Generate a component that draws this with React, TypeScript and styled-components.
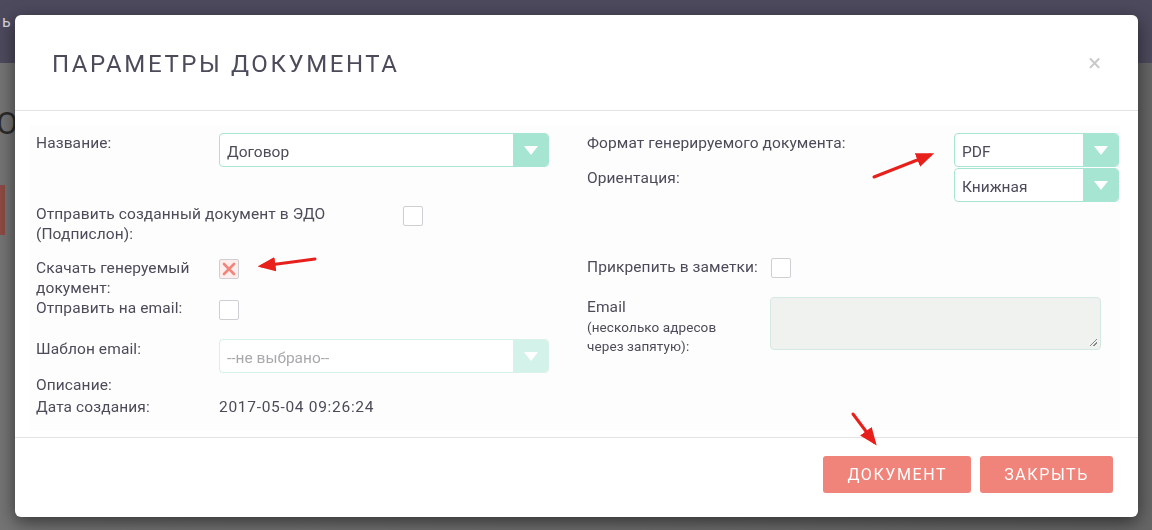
import React from "react";
import styled, { createGlobalStyle } from "styled-components";

const GlobalStyle = createGlobalStyle`
  html, body {
    margin: 0;
    padding: 0;
    width: 1152px;
    height: 530px;
    overflow: hidden;
    background: #6c6c6c;
    font-family: Roboto, "Liberation Sans", Arial, sans-serif;
  }
  * { box-sizing: border-box; }
`;

type FieldProps = { label: React.ReactNode; labelWidth: number; top: number; children?: React.ReactNode };

const Field: React.FC<FieldProps> = ({ label, labelWidth, top, children }) => (
  <Row $top={top}>
    <Label $w={labelWidth}>{label}</Label>
    {children}
  </Row>
);

const Select: React.FC<{ value: string; width: number; disabled?: boolean }> = ({ value, width, disabled }) => (
  <SelectBox $w={width} $disabled={disabled}>
    <SelectValue $disabled={disabled}>{value}</SelectValue>
    <SelectArrow $disabled={disabled}>
      <svg width="14" height="9" viewBox="0 0 14 9">
        <path d="M0 0 H14 L7 9 Z" fill="#fff" />
      </svg>
    </SelectArrow>
  </SelectBox>
);

const Checkbox: React.FC<{ checked?: boolean; offset?: number }> = ({ checked, offset = 0 }) => (
  <Check $checked={checked} $offset={offset}>
    {checked && (
      <svg width="14" height="14" viewBox="0 0 14 14">
        <path d="M2 2 L12 12 M12 2 L2 12" stroke="#f0857b" strokeWidth="2.6" strokeLinecap="round" />
      </svg>
    )}
  </Check>
);

const App: React.FC = () => {
  return (
    <React.Fragment>
      <GlobalStyle />
      <Page>
        <TopBar>
          <TopText>ь</TopText>
        </TopBar>
        <PageBody>
          <PageHeading>О</PageHeading>
          <PageButton />
        </PageBody>
      </Page>

      <Overlay>
        <Modal>
          <Header>
            <Title>Параметры документа</Title>
            <Close>×</Close>
          </Header>
          <Body>
            <Panel>
              <Column>
                <Field label="Название:" labelWidth={183} top={0}>
                  <Select value="Договор" width={330} />
                </Field>
                <Field
                  label={
                    <>
                      Отправить созданный документ в ЭДО
                      <br />
                      (Подпислон):
                    </>
                  }
                  labelWidth={367}
                  top={37}
                >
                  <Checkbox offset={2} />
                </Field>
                <Field
                  label={
                    <>
                      Скачать генеруемый
                      <br />
                      документ:
                    </>
                  }
                  labelWidth={183}
                  top={14}
                >
                  <Checkbox checked offset={1} />
                </Field>
                <Field label="Отправить на email:" labelWidth={183} top={0}>
                  <Checkbox offset={2} />
                </Field>
                <Field label="Шаблон email:" labelWidth={183} top={19}>
                  <Select value="--не выбрано--" width={330} disabled />
                </Field>
                <Field label="Описание:" labelWidth={183} top={2}></Field>
                <Field label="Дата создания:" labelWidth={183} top={2}>
                  <Value>2017-05-04 09:26:24</Value>
                </Field>
              </Column>
              <Column>
                <Field label="Формат генерируемого документа:" labelWidth={367} top={0}>
                  <Select value="PDF" width={165} />
                </Field>
                <Field label="Ориентация:" labelWidth={367} top={1}>
                  <Select value="Книжная" width={165} />
                </Field>
                <Field label="Прикрепить в заметки:" labelWidth={184} top={55}>
                  <Checkbox offset={1} />
                </Field>
                <Field
                  label={
                    <>
                      Email
                      <Hint>
                        (несколько адресов
                        <br />
                        через запятую):
                      </Hint>
                    </>
                  }
                  labelWidth={183}
                  top={19}
                >
                  <Textarea />
                </Field>
              </Column>
            </Panel>
          </Body>
          <Footer>
            <Button>Документ</Button>
            <Button>Закрыть</Button>
          </Footer>
        </Modal>
      </Overlay>

      <Annotations width="1152" height="530" viewBox="0 0 1152 530">
        <defs>
          <marker id="head" markerWidth="6" markerHeight="6" refX="4.5" refY="3" orient="auto" markerUnits="strokeWidth">
            <path d="M0 0.6 L6 3 L0 5.4 Z" fill="#e8201c" />
          </marker>
        </defs>
        <line x1="874" y1="177" x2="930" y2="155" stroke="#e8201c" strokeWidth="3" strokeLinecap="round" markerEnd="url(#head)" />
        <line x1="315" y1="259" x2="262" y2="266" stroke="#e8201c" strokeWidth="3" strokeLinecap="round" markerEnd="url(#head)" />
        <line x1="853" y1="414" x2="874" y2="442" stroke="#e8201c" strokeWidth="3" strokeLinecap="round" markerEnd="url(#head)" />
      </Annotations>
    </React.Fragment>
  );
};

const Page = styled.div`
  width: 1152px;
  height: 530px;
  display: flex;
  flex-direction: column;
`;
const TopBar = styled.div`
  height: 63px;
  background: #4e4a5e;
  padding: 12px 0 0 2px;
`;
const TopText = styled.span`
  color: #d8d6e0;
  font-size: 16px;
`;
const PageBody = styled.div`
  flex: 1;
  background: linear-gradient(90deg, #747474 0, #6c6c6c 60%, #666 100%);
  padding: 40px 0 0 0;
`;
const PageHeading = styled.div`
  font-size: 32px;
  color: #2b2b2b;
  margin-left: -4px;
  line-height: 40px;
`;
const PageButton = styled.div`
  width: 5px;
  height: 50px;
  margin-top: 42px;
  background: #8d4a44;
`;

const Overlay = styled.div`
  position: fixed;
  inset: 0;
  padding: 15px 14px 0 15px;
`;
const Modal = styled.div`
  width: 1123px;
  height: 502px;
  background: #fff;
  border-radius: 6px;
  box-shadow: 0 5px 18px rgba(0, 0, 0, 0.55);
  display: flex;
  flex-direction: column;
`;
const Header = styled.div`
  height: 96px;
  border-bottom: 1px solid #e3e3e3;
  display: flex;
  align-items: flex-start;
  justify-content: space-between;
  padding: 34px 37px 0 37px;
`;
const Title = styled.h1`
  margin: 0;
  font-weight: 400;
  font-size: 24px;
  line-height: 30px;
  letter-spacing: 2.6px;
  text-transform: uppercase;
  color: #4c4b5a;
`;
const Close = styled.span`
  font-size: 24px;
  line-height: 24px;
  color: #c9c9c9;
  margin: 2px 0 0 0;
`;
const Body = styled.div`
  height: 327px;
  border-bottom: 1px solid #e3e3e3;
  padding: 14px 18px 6px 15px;
`;
const Panel = styled.div`
  height: 100%;
  background: #fdfdfd;
  padding: 8px 1px 0 6px;
  display: grid;
  grid-template-columns: 513px 532px;
  column-gap: 38px;
`;
const Column = styled.div`
  display: flex;
  flex-direction: column;
`;
const Row = styled.div<{ $top: number }>`
  display: flex;
  align-items: flex-start;
  margin-top: ${(p) => p.$top}px;
`;
const Label = styled.div<{ $w: number }>`
  width: ${(p) => p.$w}px;
  flex: none;
  font-size: 15.5px;
  line-height: 20px;
  letter-spacing: 0.1px;
  color: #4d4b59;
`;
const Hint = styled.div`
  font-size: 13.5px;
  line-height: 19px;
  margin-top: 1px;
`;
const Value = styled.div`
  font-size: 15.5px;
  line-height: 20px;
  letter-spacing: 0.7px;
  color: #4d4b59;
`;
const SelectBox = styled.div<{ $w: number; $disabled?: boolean }>`
  width: ${(p) => p.$w}px;
  height: 34px;
  border: 1px solid ${(p) => (p.$disabled ? "#d6f2ea" : "#a7e5d3")};
  border-radius: 4px;
  display: flex;
  background: #fff;
  overflow: hidden;
`;
const SelectValue = styled.div<{ $disabled?: boolean }>`
  flex: 1;
  padding: 2px 7px 0;
  font-size: 15.5px;
  line-height: 32px;
  color: ${(p) => (p.$disabled ? "#a9a9ad" : "#4d4b59")};
`;
const SelectArrow = styled.div<{ $disabled?: boolean }>`
  width: 36px;
  background: ${(p) => (p.$disabled ? "#d3f3ea" : "#a7e5d3")};
  display: flex;
  align-items: center;
  justify-content: center;
  margin: -1px -1px -1px 0;
`;
const Check = styled.div<{ $checked?: boolean; $offset: number }>`
  width: 20px;
  height: 20px;
  margin-top: ${(p) => p.$offset}px;
  border: 1px solid #cfcfd3;
  border-radius: 2px;
  background: ${(p) => (p.$checked ? "#fdeeed" : "#fff")};
  display: flex;
  align-items: center;
  justify-content: center;
`;
const Textarea = styled.div`
  width: 331px;
  height: 53px;
  background: #f0f2ef;
  border: 1px solid #d4e9e1;
  border-radius: 4px;
  position: relative;
  &::after {
    content: "";
    position: absolute;
    right: 3px;
    bottom: 3px;
    width: 7px;
    height: 7px;
    background: linear-gradient(135deg, transparent 45%, #888 45%, #888 55%, transparent 55%, transparent 70%, #888 70%, #888 80%, transparent 80%);
  }
`;
const Footer = styled.div`
  flex: 1;
  display: flex;
  justify-content: flex-end;
  align-items: flex-start;
  gap: 9px;
  padding: 18px 25px 0 0;
`;
const Button = styled.button`
  height: 37px;
  padding: 0 24px;
  border: 0;
  border-radius: 3px;
  background: #f0847a;
  color: #fff;
  font-family: Roboto, "Liberation Sans", Arial, sans-serif;
  font-size: 16px;
  letter-spacing: 1.6px;
  text-transform: uppercase;
`;
const Annotations = styled.svg`
  position: fixed;
  left: 0;
  top: 0;
  pointer-events: none;
`;

export default App;
